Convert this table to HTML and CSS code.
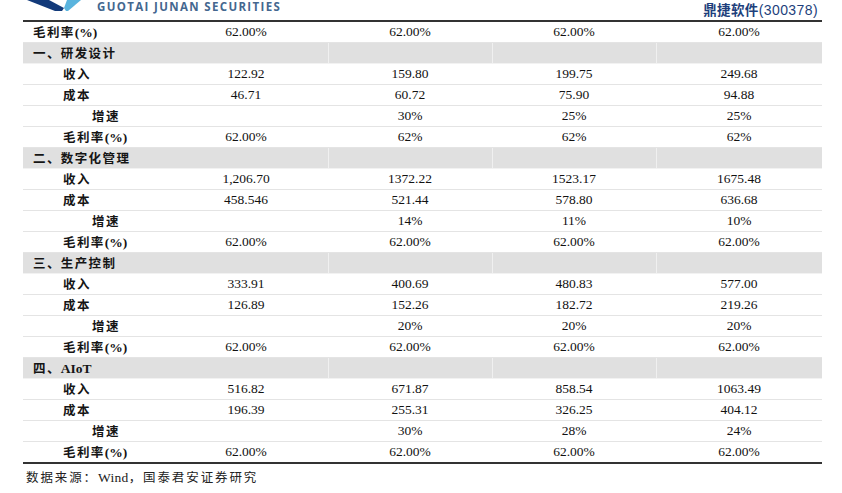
FILE: index.html
```html
<!DOCTYPE html>
<html lang="zh-CN">
<head>
<meta charset="utf-8">
<title>鼎捷软件 分业务预测</title>
<link rel="stylesheet" href="styles.css">
</head>
<body>
<div class="page">
  <header class="top">
    <div class="brand">
      <svg class="logo" width="70" height="12" viewBox="0 0 70 12" aria-hidden="true">
        <polygon points="12,0 34,0 49,8 47,11 40,11" fill="#123a7a"/>
        <polygon points="49,8 51,11 53,11 66,0 52,0" fill="#5ab4de"/>
      </svg>
      <span class="brand-name">GUOTAI JUNAN SECURITIES</span>
    </div>
    <div class="ticker">鼎捷软件<span class="code">(300378)</span></div>
  </header>

  <table class="fc">
    <colgroup>
      <col class="c-label"><col class="c-num"><col class="c-num"><col class="c-num"><col class="c-last">
    </colgroup>
    <tbody>
      <tr><td class="lb l0">毛利率<span class="lat">(%)</span></td><td>62.00%</td><td>62.00%</td><td>62.00%</td><td>62.00%</td></tr>

      <tr class="sec"><td class="lb l0" colspan="2">一、研发设计</td><td></td><td></td><td></td></tr>
      <tr><td class="lb l1">收入</td><td>122.92</td><td>159.80</td><td>199.75</td><td>249.68</td></tr>
      <tr><td class="lb l1">成本</td><td>46.71</td><td>60.72</td><td>75.90</td><td>94.88</td></tr>
      <tr><td class="lb l2">增速</td><td></td><td>30%</td><td>25%</td><td>25%</td></tr>
      <tr><td class="lb l1">毛利率<span class="lat">(%)</span></td><td>62.00%</td><td>62%</td><td>62%</td><td>62%</td></tr>

      <tr class="sec"><td class="lb l0" colspan="2">二、数字化管理</td><td></td><td></td><td></td></tr>
      <tr><td class="lb l1">收入</td><td>1,206.70</td><td>1372.22</td><td>1523.17</td><td>1675.48</td></tr>
      <tr><td class="lb l1">成本</td><td>458.546</td><td>521.44</td><td>578.80</td><td>636.68</td></tr>
      <tr><td class="lb l2">增速</td><td></td><td>14%</td><td>11%</td><td>10%</td></tr>
      <tr><td class="lb l1">毛利率<span class="lat">(%)</span></td><td>62.00%</td><td>62.00%</td><td>62.00%</td><td>62.00%</td></tr>

      <tr class="sec"><td class="lb l0" colspan="2">三、生产控制</td><td></td><td></td><td></td></tr>
      <tr><td class="lb l1">收入</td><td>333.91</td><td>400.69</td><td>480.83</td><td>577.00</td></tr>
      <tr><td class="lb l1">成本</td><td>126.89</td><td>152.26</td><td>182.72</td><td>219.26</td></tr>
      <tr><td class="lb l2">增速</td><td></td><td>20%</td><td>20%</td><td>20%</td></tr>
      <tr><td class="lb l1">毛利率<span class="lat">(%)</span></td><td>62.00%</td><td>62.00%</td><td>62.00%</td><td>62.00%</td></tr>

      <tr class="sec"><td class="lb l0" colspan="2">四、<span class="lat">AIoT</span></td><td></td><td></td><td></td></tr>
      <tr><td class="lb l1">收入</td><td>516.82</td><td>671.87</td><td>858.54</td><td>1063.49</td></tr>
      <tr><td class="lb l1">成本</td><td>196.39</td><td>255.31</td><td>326.25</td><td>404.12</td></tr>
      <tr><td class="lb l2">增速</td><td></td><td>30%</td><td>28%</td><td>24%</td></tr>
      <tr class="last"><td class="lb l1">毛利率<span class="lat">(%)</span></td><td>62.00%</td><td>62.00%</td><td>62.00%</td><td>62.00%</td></tr>
    </tbody>
  </table>

  <p class="source">数据来源：<span class="lat">Wind</span>，国泰君安证券研究</p>
</div>
</body>
</html>
```

FILE: styles.css
```css
html, body {
  margin: 0;
  padding: 0;
  background: #ffffff;
}

.page {
  width: 842px;
  height: 493px;
  overflow: hidden;
  color: #111111;
}

.top {
  display: flex;
  justify-content: space-between;
  align-items: flex-start;
  height: 20px;
  padding-left: 15px;
  padding-right: 24px;
}

.brand {
  display: flex;
  align-items: flex-start;
}

.logo {
  display: block;
  flex: none;
}

.brand-name {
  margin-left: 12px;
  margin-top: 1px;
  font-family: "Open Sans", "Liberation Sans", sans-serif;
  font-weight: 700;
  font-size: 11.5px;
  line-height: 12px;
  letter-spacing: 1.35px;
  color: #44678f;
}

.ticker {
  margin-top: 2px;
  font-family: "Noto Sans CJK SC", sans-serif;
  font-weight: 700;
  font-size: 13.5px;
  line-height: 15px;
  letter-spacing: 0.4px;
  color: #1e3f7c;
}

.ticker .code {
  font-family: "Liberation Sans", sans-serif;
  font-weight: 400;
  font-size: 14px;
}

.fc {
  margin-left: 23px;
  width: 799px;
  border-collapse: collapse;
  table-layout: fixed;
  border-top: 2px solid #333333;
}

.c-label { width: 141px; }
.c-num { width: 164px; }
.c-last { width: 166px; }

.fc td {
  height: 20px;
  padding: 0;
  border-bottom: 1px solid #e4e4e4;
  text-align: center;
  vertical-align: middle;
  font-family: "Liberation Serif", serif;
  font-size: 13.5px;
  line-height: 20px;
  white-space: nowrap;
}

.fc td.lb {
  text-align: left;
  font-family: "Noto Sans CJK SC", serif;
  font-weight: 700;
  font-size: 12.5px;
  letter-spacing: 1.4px;
  color: #151515;
}

.fc .lat {
  font-family: "Liberation Serif", serif;
  font-weight: 700;
  font-size: 13.5px;
  line-height: 14px;
  letter-spacing: 0;
}

.fc td.l0 { padding-left: 10px; }
.fc td.l1 { padding-left: 40px; }
.fc td.l2 { padding-left: 69px; }

.fc tr.sec td {
  background: #e0e0e0;
  border-bottom: 1px solid #f2f2f2;
}

.fc tr.sec td + td {
  border-left: 1px solid #f0f0f0;
}

.fc tr.last td {
  border-bottom: 2px solid #333333;
}

.source {
  margin: 5px 0 0 26px;
  font-family: "Noto Sans CJK SC", serif;
  font-size: 12.5px;
  line-height: 16px;
  letter-spacing: 1.9px;
  color: #222222;
}

.source .lat {
  font-family: "Liberation Serif", serif;
  font-size: 13.5px;
  line-height: 14px;
  letter-spacing: 0.3px;
}
```
